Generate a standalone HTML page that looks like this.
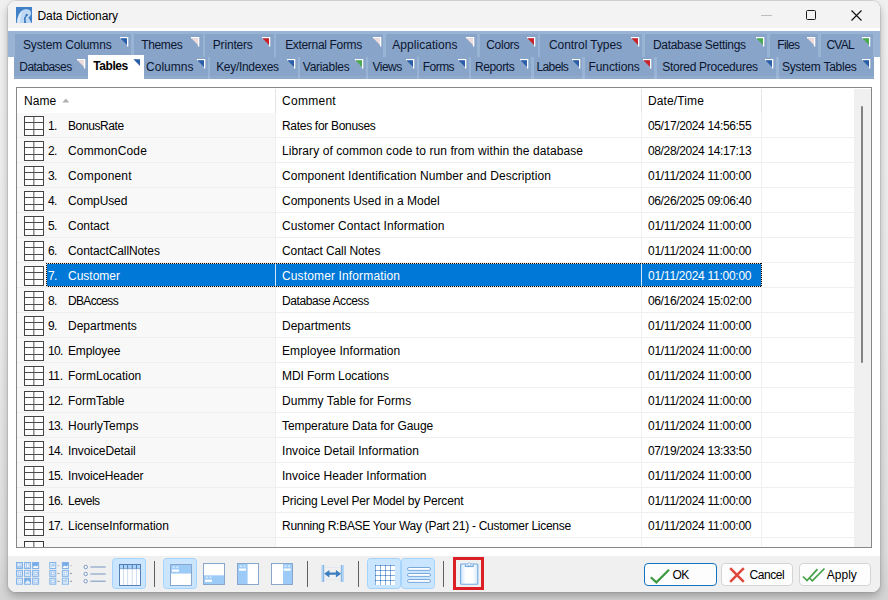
<!DOCTYPE html>
<html><head><meta charset="utf-8"><title>Data Dictionary</title>
<style>
html,body{margin:0;padding:0}
body{width:888px;height:600px;overflow:hidden;position:relative;background:linear-gradient(#f0f0f0,#ebebeb 50%,#dedede 92%,#d4d4d4);font-family:"Liberation Sans",sans-serif;font-size:12px}
.a{position:absolute;display:block}
.t{position:absolute;white-space:nowrap;font-family:"Liberation Sans",sans-serif;font-size:12px}
#win{position:absolute;left:8px;top:1px;width:872px;height:591px;border-radius:8px;background:#fff;overflow:hidden;box-shadow:0 0 0 1px rgba(140,140,140,.25),0 4px 9px 0 rgba(0,0,0,.28)}
#in{position:absolute;left:-8px;top:-1px;width:888px;height:600px}
</style></head><body>
<div id="win"><div id="in">
<div class="a" style="left:8px;top:1px;width:872px;height:27px;background:#f3f3f3"></div>
<svg class="a" style="left:16px;top:7px" width="16" height="16" viewBox="0 0 16 16"><rect width="16" height="16" fill="#3f80c8"/><path d="M0.8 16C1.2 9.5 3.5 4 8 2.6C12 1.5 15.4 3.2 15 6.6C14.8 8.6 13.8 9.8 12.4 10.4L15.6 16H10.4L9.4 13L9.2 16Z" fill="#bfd9f4"/><path d="M1.2 16C1.6 11 3.4 6.4 6.6 4.2C4.8 7 4 11 4 16Z" fill="#dcebfa"/><path d="M9.3 9.6C9.1 7.7 10 6.7 11.2 6.9C12.2 7.1 12.2 8.3 11.4 8.9L9.9 9.9L9.4 16H8.1V10.2Z" fill="#3a78be"/></svg>
<div class="t" style="left:37.5px;top:2.2px;height:29px;line-height:29px;color:#000;letter-spacing:-0.102px;">Data Dictionary</div>
<div class="a" style="left:761px;top:14.6px;width:10.5px;height:1px;background:#bdbdbd"></div>
<div class="a" style="left:805.6px;top:9.8px;width:10.4px;height:10.4px;border:1.2px solid #1a1a1a;border-radius:1.5px;box-sizing:border-box"></div>
<svg class="a" style="left:851.4px;top:9.7px" width="11" height="11" viewBox="0 0 11 11"><path d="M0.5 0.5L10.5 10.5M10.5 0.5L0.5 10.5" stroke="#111" stroke-width="1.15" fill="none"/></svg>
<div class="a" style="left:8px;top:31px;width:872px;height:25.5px;background:#99b3d5"></div>
<div class="a" style="left:14px;top:56px;width:860px;height:22.7px;background:#99b3d5"></div>
<div class="a" style="left:14.5px;top:33.9px;width:116.5px;height:22.9px;background:#88a4c8"></div>
<div class="t" style="left:23px;top:34.1px;height:22px;line-height:22px;color:#0b1630;letter-spacing:-0.157px;">System Columns</div>
<svg class="a" style="left:120px;top:36.6px" width="9" height="10" viewBox="0 0 9 10"><path d="M0 0H8.3V9.6H6.9V1.4H0Z" fill="#fff"/><path d="M0.4 1.3H7V8Z" fill="#2b5ea9"/></svg>
<div class="a" style="left:133.7px;top:33.9px;width:69.0px;height:22.9px;background:#88a4c8"></div>
<div class="t" style="left:141.2px;top:34.1px;height:22px;line-height:22px;color:#0b1630;letter-spacing:-0.358px;">Themes</div>
<svg class="a" style="left:191px;top:36.6px" width="9" height="10" viewBox="0 0 9 10"><path d="M0 0H8.3V9.6H6.9V1.4H0Z" fill="#fff"/><path d="M0.4 1.3H7V8Z" fill="#efdcdc"/></svg>
<div class="a" style="left:205.3px;top:33.9px;width:68.3px;height:22.9px;background:#88a4c8"></div>
<div class="t" style="left:212.8px;top:34.1px;height:22px;line-height:22px;color:#0b1630;letter-spacing:-0.181px;">Printers</div>
<svg class="a" style="left:262px;top:36.6px" width="9" height="10" viewBox="0 0 9 10"><path d="M0 0H8.3V9.6H6.9V1.4H0Z" fill="#fff"/><path d="M0.4 1.3H7V8Z" fill="#c9222b"/></svg>
<div class="a" style="left:276.3px;top:33.9px;width:107.0px;height:22.9px;background:#88a4c8"></div>
<div class="t" style="left:285.2px;top:34.1px;height:22px;line-height:22px;color:#0b1630;letter-spacing:-0.332px;">External Forms</div>
<svg class="a" style="left:372.5px;top:36.6px" width="9" height="10" viewBox="0 0 9 10"><path d="M0 0H8.3V9.6H6.9V1.4H0Z" fill="#fff"/><path d="M0.4 1.3H7V8Z" fill="#efdcdc"/></svg>
<div class="a" style="left:386px;top:33.9px;width:90.8px;height:22.9px;background:#88a4c8"></div>
<div class="t" style="left:392.3px;top:34.1px;height:22px;line-height:22px;color:#0b1630;letter-spacing:0.041px;">Applications</div>
<svg class="a" style="left:466px;top:36.6px" width="9" height="10" viewBox="0 0 9 10"><path d="M0 0H8.3V9.6H6.9V1.4H0Z" fill="#fff"/><path d="M0.4 1.3H7V8Z" fill="#efdcdc"/></svg>
<div class="a" style="left:479.5px;top:33.9px;width:58.1px;height:22.9px;background:#88a4c8"></div>
<div class="t" style="left:486.2px;top:34.1px;height:22px;line-height:22px;color:#0b1630;letter-spacing:-0.263px;">Colors</div>
<svg class="a" style="left:527px;top:36.6px" width="9" height="10" viewBox="0 0 9 10"><path d="M0 0H8.3V9.6H6.9V1.4H0Z" fill="#fff"/><path d="M0.4 1.3H7V8Z" fill="#c9222b"/></svg>
<div class="a" style="left:540.2px;top:33.9px;width:101.5px;height:22.9px;background:#88a4c8"></div>
<div class="t" style="left:549px;top:34.1px;height:22px;line-height:22px;color:#0b1630;letter-spacing:-0.063px;">Control Types</div>
<svg class="a" style="left:630.5px;top:36.6px" width="9" height="10" viewBox="0 0 9 10"><path d="M0 0H8.3V9.6H6.9V1.4H0Z" fill="#fff"/><path d="M0.4 1.3H7V8Z" fill="#c9222b"/></svg>
<div class="a" style="left:645px;top:33.9px;width:122.0px;height:22.9px;background:#88a4c8"></div>
<div class="t" style="left:653px;top:34.1px;height:22px;line-height:22px;color:#0b1630;letter-spacing:-0.315px;">Database Settings</div>
<svg class="a" style="left:756px;top:36.6px" width="9" height="10" viewBox="0 0 9 10"><path d="M0 0H8.3V9.6H6.9V1.4H0Z" fill="#fff"/><path d="M0.4 1.3H7V8Z" fill="#4cad50"/></svg>
<div class="a" style="left:770px;top:33.9px;width:48.3px;height:22.9px;background:#88a4c8"></div>
<div class="t" style="left:777.2px;top:34.1px;height:22px;line-height:22px;color:#0b1630;letter-spacing:-0.627px;">Files</div>
<svg class="a" style="left:807.2px;top:36.6px" width="9" height="10" viewBox="0 0 9 10"><path d="M0 0H8.3V9.6H6.9V1.4H0Z" fill="#fff"/><path d="M0.4 1.3H7V8Z" fill="#efdcdc"/></svg>
<div class="a" style="left:820.5px;top:33.9px;width:52.2px;height:22.9px;background:#88a4c8"></div>
<div class="t" style="left:826.4px;top:34.1px;height:22px;line-height:22px;color:#0b1630;letter-spacing:-0.764px;">CVAL</div>
<svg class="a" style="left:861.7px;top:36.6px" width="9" height="10" viewBox="0 0 9 10"><path d="M0 0H8.3V9.6H6.9V1.4H0Z" fill="#fff"/><path d="M0.4 1.3H7V8Z" fill="#4cad50"/></svg>
<div class="a" style="left:14px;top:57px;width:74.0px;height:21.7px;background:#88a4c8"></div>
<div class="t" style="left:19.3px;top:55.9px;height:22px;line-height:22px;color:#0b1630;letter-spacing:-0.563px;">Databases</div>
<svg class="a" style="left:77.2px;top:59.2px" width="9" height="10" viewBox="0 0 9 10"><path d="M0 0H8.3V9.6H6.9V1.4H0Z" fill="#fff"/><path d="M0.4 1.3H7V8Z" fill="#efdcdc"/></svg>
<div class="a" style="left:88px;top:54.6px;width:56.0px;height:24px;background:#fff"></div>
<div class="t" style="left:93.3px;top:54.6px;height:22px;line-height:22px;color:#000;letter-spacing:-0.454px;font-weight:bold;">Tables</div>
<svg class="a" style="left:132.7px;top:58.2px" width="9" height="10" viewBox="0 0 9 10"><path d="M0 0H8.3V9.6H6.9V1.4H0Z" fill="#fff"/><path d="M0.4 1.3H7V8Z" fill="#2b5ea9"/></svg>
<div class="a" style="left:144px;top:57px;width:63.8px;height:21.7px;background:#88a4c8"></div>
<div class="t" style="left:146px;top:55.9px;height:22px;line-height:22px;color:#0b1630;letter-spacing:0.036px;">Columns</div>
<svg class="a" style="left:197.2px;top:59.2px" width="9" height="10" viewBox="0 0 9 10"><path d="M0 0H8.3V9.6H6.9V1.4H0Z" fill="#fff"/><path d="M0.4 1.3H7V8Z" fill="#2b5ea9"/></svg>
<div class="a" style="left:210px;top:57px;width:87.5px;height:21.7px;background:#88a4c8"></div>
<div class="t" style="left:216.2px;top:55.9px;height:22px;line-height:22px;color:#0b1630;letter-spacing:-0.322px;">Key/Indexes</div>
<svg class="a" style="left:286.7px;top:59.2px" width="9" height="10" viewBox="0 0 9 10"><path d="M0 0H8.3V9.6H6.9V1.4H0Z" fill="#fff"/><path d="M0.4 1.3H7V8Z" fill="#2b5ea9"/></svg>
<div class="a" style="left:299.8px;top:57px;width:65.8px;height:21.7px;background:#88a4c8"></div>
<div class="t" style="left:302.8px;top:55.9px;height:22px;line-height:22px;color:#0b1630;letter-spacing:-0.282px;">Variables</div>
<svg class="a" style="left:354.6px;top:59.2px" width="9" height="10" viewBox="0 0 9 10"><path d="M0 0H8.3V9.6H6.9V1.4H0Z" fill="#fff"/><path d="M0.4 1.3H7V8Z" fill="#4cad50"/></svg>
<div class="a" style="left:368px;top:57px;width:49.0px;height:21.7px;background:#88a4c8"></div>
<div class="t" style="left:372.4px;top:55.9px;height:22px;line-height:22px;color:#0b1630;letter-spacing:-0.479px;">Views</div>
<svg class="a" style="left:406.2px;top:59.2px" width="9" height="10" viewBox="0 0 9 10"><path d="M0 0H8.3V9.6H6.9V1.4H0Z" fill="#fff"/><path d="M0.4 1.3H7V8Z" fill="#2b5ea9"/></svg>
<div class="a" style="left:419.4px;top:57px;width:49.3px;height:21.7px;background:#88a4c8"></div>
<div class="t" style="left:422.7px;top:55.9px;height:22px;line-height:22px;color:#0b1630;letter-spacing:-0.519px;">Forms</div>
<svg class="a" style="left:458.3px;top:59.2px" width="9" height="10" viewBox="0 0 9 10"><path d="M0 0H8.3V9.6H6.9V1.4H0Z" fill="#fff"/><path d="M0.4 1.3H7V8Z" fill="#2b5ea9"/></svg>
<div class="a" style="left:471.4px;top:57px;width:59.4px;height:21.7px;background:#88a4c8"></div>
<div class="t" style="left:475px;top:55.9px;height:22px;line-height:22px;color:#0b1630;letter-spacing:-0.388px;">Reports</div>
<svg class="a" style="left:520.1px;top:59.2px" width="9" height="10" viewBox="0 0 9 10"><path d="M0 0H8.3V9.6H6.9V1.4H0Z" fill="#fff"/><path d="M0.4 1.3H7V8Z" fill="#2b5ea9"/></svg>
<div class="a" style="left:533.5px;top:57px;width:48.9px;height:21.7px;background:#88a4c8"></div>
<div class="t" style="left:536.4px;top:55.9px;height:22px;line-height:22px;color:#0b1630;letter-spacing:-0.577px;">Labels</div>
<svg class="a" style="left:571.8px;top:59.2px" width="9" height="10" viewBox="0 0 9 10"><path d="M0 0H8.3V9.6H6.9V1.4H0Z" fill="#fff"/><path d="M0.4 1.3H7V8Z" fill="#2b5ea9"/></svg>
<div class="a" style="left:584.6px;top:57px;width:69.2px;height:21.7px;background:#88a4c8"></div>
<div class="t" style="left:588.5px;top:55.9px;height:22px;line-height:22px;color:#0b1630;letter-spacing:-0.092px;">Functions</div>
<svg class="a" style="left:643px;top:59.2px" width="9" height="10" viewBox="0 0 9 10"><path d="M0 0H8.3V9.6H6.9V1.4H0Z" fill="#fff"/><path d="M0.4 1.3H7V8Z" fill="#c9222b"/></svg>
<div class="a" style="left:657px;top:57px;width:119.0px;height:21.7px;background:#88a4c8"></div>
<div class="t" style="left:662.3px;top:55.9px;height:22px;line-height:22px;color:#0b1630;letter-spacing:-0.268px;">Stored Procedures</div>
<svg class="a" style="left:765.3px;top:59.2px" width="9" height="10" viewBox="0 0 9 10"><path d="M0 0H8.3V9.6H6.9V1.4H0Z" fill="#fff"/><path d="M0.4 1.3H7V8Z" fill="#2b5ea9"/></svg>
<div class="a" style="left:779px;top:57px;width:94.5px;height:21.7px;background:#88a4c8"></div>
<div class="t" style="left:782px;top:55.9px;height:22px;line-height:22px;color:#0b1630;letter-spacing:-0.247px;">System Tables</div>
<svg class="a" style="left:862.2px;top:59.2px" width="9" height="10" viewBox="0 0 9 10"><path d="M0 0H8.3V9.6H6.9V1.4H0Z" fill="#fff"/><path d="M0.4 1.3H7V8Z" fill="#2b5ea9"/></svg>
<div class="a" style="left:14px;top:75.6px;width:860px;height:3.1px;background:rgba(255,255,255,0.07)"></div>
<div class="a" style="left:88px;top:75px;width:56px;height:4px;background:#fff"></div>
<div class="a" style="left:16px;top:87px;width:855.5px;height:460.5px;background:#fff;border:1px solid #868789;box-sizing:border-box"></div>
<div class="a" style="left:17px;top:113px;width:258px;height:434px;background:#f8f8f8"></div>
<div class="a" style="left:854px;top:89px;width:17px;height:458px;background:#f0f0f0"></div>
<div class="a" style="left:861px;top:106px;width:2.2px;height:256.5px;background:#828282;border-radius:1px"></div>
<div class="t" style="left:24px;top:90.2px;height:23px;line-height:23px;color:#000;letter-spacing:0.050px;">Name</div>
<svg class="a" style="left:61.6px;top:98px" width="8" height="5" viewBox="0 0 8 5"><path d="M0.3 4.4L3.8 0.6L7.3 4.4Z" fill="#b0b0b0"/></svg>
<div class="t" style="left:282px;top:90.2px;height:23px;line-height:23px;color:#000;letter-spacing:0.280px;">Comment</div>
<div class="t" style="left:648px;top:90.2px;height:23px;line-height:23px;color:#000;letter-spacing:0.117px;">Date/Time</div>
<div class="a" style="left:275px;top:89px;width:1px;height:24px;background:#e5e5e5"></div>
<div class="a" style="left:275px;top:113px;width:1px;height:434px;background:#f0f0f0"></div>
<div class="a" style="left:641px;top:89px;width:1px;height:24px;background:#e5e5e5"></div>
<div class="a" style="left:641px;top:113px;width:1px;height:434px;background:#f0f0f0"></div>
<div class="a" style="left:761px;top:89px;width:1px;height:24px;background:#e5e5e5"></div>
<div class="a" style="left:761px;top:113px;width:1px;height:434px;background:#f0f0f0"></div>
<div class="a" style="left:17px;top:137px;width:837px;height:1px;background:#efefef"></div>
<svg class="a" style="left:24px;top:116px" width="20" height="20" viewBox="0 0 20 20"><rect x="0.5" y="0.5" width="19" height="19" fill="#fff" stroke="#444"/><path d="M9.75 1V19" stroke="#8c8c8c" stroke-width="1.5"/><path d="M1 6.5H19M1 13.5H19" stroke="#4c4c4c"/></svg>
<div class="t" style="left:48px;top:114.2px;height:25px;line-height:25px;color:#000;letter-spacing:-0.720px;">1.</div>
<div class="t" style="left:68px;top:114.2px;height:25px;line-height:25px;color:#000;letter-spacing:-0.400px;">BonusRate</div>
<div class="t" style="left:282px;top:114.2px;height:25px;line-height:25px;color:#000;letter-spacing:-0.304px;">Rates for Bonuses</div>
<div class="t" style="left:648px;top:114.2px;height:25px;line-height:25px;color:#000;letter-spacing:-0.363px;">05/17/2024 14:56:55</div>
<div class="a" style="left:17px;top:162px;width:837px;height:1px;background:#efefef"></div>
<svg class="a" style="left:24px;top:141px" width="20" height="20" viewBox="0 0 20 20"><rect x="0.5" y="0.5" width="19" height="19" fill="#fff" stroke="#444"/><path d="M9.75 1V19" stroke="#8c8c8c" stroke-width="1.5"/><path d="M1 6.5H19M1 13.5H19" stroke="#4c4c4c"/></svg>
<div class="t" style="left:48px;top:139.2px;height:25px;line-height:25px;color:#000;letter-spacing:-0.720px;">2.</div>
<div class="t" style="left:68px;top:139.2px;height:25px;line-height:25px;color:#000;letter-spacing:0.160px;">CommonCode</div>
<div class="t" style="left:282px;top:139.2px;height:25px;line-height:25px;color:#000;letter-spacing:0.077px;">Library of common code to run from within the database</div>
<div class="t" style="left:648px;top:139.2px;height:25px;line-height:25px;color:#000;letter-spacing:-0.363px;">08/28/2024 14:17:13</div>
<div class="a" style="left:17px;top:187px;width:837px;height:1px;background:#efefef"></div>
<svg class="a" style="left:24px;top:166px" width="20" height="20" viewBox="0 0 20 20"><rect x="0.5" y="0.5" width="19" height="19" fill="#fff" stroke="#444"/><path d="M9.75 1V19" stroke="#8c8c8c" stroke-width="1.5"/><path d="M1 6.5H19M1 13.5H19" stroke="#4c4c4c"/></svg>
<div class="t" style="left:48px;top:164.2px;height:25px;line-height:25px;color:#000;letter-spacing:-0.720px;">3.</div>
<div class="t" style="left:68px;top:164.2px;height:25px;line-height:25px;color:#000;letter-spacing:0.189px;">Component</div>
<div class="t" style="left:282px;top:164.2px;height:25px;line-height:25px;color:#000;letter-spacing:0.075px;">Component Identification Number and Description</div>
<div class="t" style="left:648px;top:164.2px;height:25px;line-height:25px;color:#000;letter-spacing:-0.269px;">01/11/2024 11:00:00</div>
<div class="a" style="left:17px;top:212px;width:837px;height:1px;background:#efefef"></div>
<svg class="a" style="left:24px;top:191px" width="20" height="20" viewBox="0 0 20 20"><rect x="0.5" y="0.5" width="19" height="19" fill="#fff" stroke="#444"/><path d="M9.75 1V19" stroke="#8c8c8c" stroke-width="1.5"/><path d="M1 6.5H19M1 13.5H19" stroke="#4c4c4c"/></svg>
<div class="t" style="left:48px;top:189.2px;height:25px;line-height:25px;color:#000;letter-spacing:-0.720px;">4.</div>
<div class="t" style="left:68px;top:189.2px;height:25px;line-height:25px;color:#000;letter-spacing:-0.094px;">CompUsed</div>
<div class="t" style="left:282px;top:189.2px;height:25px;line-height:25px;color:#000;letter-spacing:-0.018px;">Components Used in a Model</div>
<div class="t" style="left:648px;top:189.2px;height:25px;line-height:25px;color:#000;letter-spacing:-0.363px;">06/26/2025 09:06:40</div>
<div class="a" style="left:17px;top:237px;width:837px;height:1px;background:#efefef"></div>
<svg class="a" style="left:24px;top:216px" width="20" height="20" viewBox="0 0 20 20"><rect x="0.5" y="0.5" width="19" height="19" fill="#fff" stroke="#444"/><path d="M9.75 1V19" stroke="#8c8c8c" stroke-width="1.5"/><path d="M1 6.5H19M1 13.5H19" stroke="#4c4c4c"/></svg>
<div class="t" style="left:48px;top:214.2px;height:25px;line-height:25px;color:#000;letter-spacing:-0.720px;">5.</div>
<div class="t" style="left:68px;top:214.2px;height:25px;line-height:25px;color:#000;letter-spacing:-0.039px;">Contact</div>
<div class="t" style="left:282px;top:214.2px;height:25px;line-height:25px;color:#000;letter-spacing:0.084px;">Customer Contact Information</div>
<div class="t" style="left:648px;top:214.2px;height:25px;line-height:25px;color:#000;letter-spacing:-0.269px;">01/11/2024 11:00:00</div>
<div class="a" style="left:17px;top:262px;width:837px;height:1px;background:#efefef"></div>
<svg class="a" style="left:24px;top:241px" width="20" height="20" viewBox="0 0 20 20"><rect x="0.5" y="0.5" width="19" height="19" fill="#fff" stroke="#444"/><path d="M9.75 1V19" stroke="#8c8c8c" stroke-width="1.5"/><path d="M1 6.5H19M1 13.5H19" stroke="#4c4c4c"/></svg>
<div class="t" style="left:48px;top:239.2px;height:25px;line-height:25px;color:#000;letter-spacing:-0.720px;">6.</div>
<div class="t" style="left:68px;top:239.2px;height:25px;line-height:25px;color:#000;letter-spacing:-0.098px;">ContactCallNotes</div>
<div class="t" style="left:282px;top:239.2px;height:25px;line-height:25px;color:#000;letter-spacing:-0.096px;">Contact Call Notes</div>
<div class="t" style="left:648px;top:239.2px;height:25px;line-height:25px;color:#000;letter-spacing:-0.269px;">01/11/2024 11:00:00</div>
<div class="a" style="left:17px;top:287px;width:837px;height:1px;background:#efefef"></div>
<div class="a" style="left:46px;top:263px;width:716px;height:24px;background:#0078d7"></div>
<div class="a" style="left:46px;top:263px;width:716px;height:1px;background:repeating-linear-gradient(90deg,#0a0a0a 0 1px,#e9d6c6 1px 2px)"></div>
<div class="a" style="left:46px;top:286px;width:716px;height:1px;background:repeating-linear-gradient(90deg,#0a0a0a 0 1px,#e9d6c6 1px 2px)"></div>
<div class="a" style="left:46px;top:263px;width:1px;height:24px;background:repeating-linear-gradient(180deg,#0a0a0a 0 1px,#e9d6c6 1px 2px)"></div>
<div class="a" style="left:761px;top:263px;width:1px;height:24px;background:repeating-linear-gradient(180deg,#0a0a0a 0 1px,#e9d6c6 1px 2px)"></div>
<div class="a" style="left:275px;top:264px;width:1px;height:22px;background:#cfe4f7"></div>
<div class="a" style="left:641px;top:264px;width:1px;height:22px;background:#cfe4f7"></div>
<svg class="a" style="left:24px;top:266px" width="20" height="20" viewBox="0 0 20 20"><rect x="0.5" y="0.5" width="19" height="19" fill="#fff" stroke="#444"/><path d="M9.75 1V19" stroke="#8c8c8c" stroke-width="1.5"/><path d="M1 6.5H19M1 13.5H19" stroke="#4c4c4c"/></svg>
<div class="t" style="left:48px;top:264.2px;height:25px;line-height:25px;color:#fff;letter-spacing:-0.720px;">7.</div>
<div class="t" style="left:68px;top:264.2px;height:25px;line-height:25px;color:#fff;letter-spacing:0.001px;">Customer</div>
<div class="t" style="left:282px;top:264.2px;height:25px;line-height:25px;color:#fff;letter-spacing:0.135px;">Customer Information</div>
<div class="t" style="left:648px;top:264.2px;height:25px;line-height:25px;color:#fff;letter-spacing:-0.269px;">01/11/2024 11:00:00</div>
<div class="a" style="left:17px;top:312px;width:837px;height:1px;background:#efefef"></div>
<svg class="a" style="left:24px;top:291px" width="20" height="20" viewBox="0 0 20 20"><rect x="0.5" y="0.5" width="19" height="19" fill="#fff" stroke="#444"/><path d="M9.75 1V19" stroke="#8c8c8c" stroke-width="1.5"/><path d="M1 6.5H19M1 13.5H19" stroke="#4c4c4c"/></svg>
<div class="t" style="left:48px;top:289.2px;height:25px;line-height:25px;color:#000;letter-spacing:-0.720px;">8.</div>
<div class="t" style="left:68px;top:289.2px;height:25px;line-height:25px;color:#000;letter-spacing:-0.672px;">DBAccess</div>
<div class="t" style="left:282px;top:289.2px;height:25px;line-height:25px;color:#000;letter-spacing:-0.399px;">Database Access</div>
<div class="t" style="left:648px;top:289.2px;height:25px;line-height:25px;color:#000;letter-spacing:-0.363px;">06/16/2024 15:02:00</div>
<div class="a" style="left:17px;top:337px;width:837px;height:1px;background:#efefef"></div>
<svg class="a" style="left:24px;top:316px" width="20" height="20" viewBox="0 0 20 20"><rect x="0.5" y="0.5" width="19" height="19" fill="#fff" stroke="#444"/><path d="M9.75 1V19" stroke="#8c8c8c" stroke-width="1.5"/><path d="M1 6.5H19M1 13.5H19" stroke="#4c4c4c"/></svg>
<div class="t" style="left:48px;top:314.2px;height:25px;line-height:25px;color:#000;letter-spacing:-0.720px;">9.</div>
<div class="t" style="left:68px;top:314.2px;height:25px;line-height:25px;color:#000;letter-spacing:0.002px;">Departments</div>
<div class="t" style="left:282px;top:314.2px;height:25px;line-height:25px;color:#000;letter-spacing:0.002px;">Departments</div>
<div class="t" style="left:648px;top:314.2px;height:25px;line-height:25px;color:#000;letter-spacing:-0.269px;">01/11/2024 11:00:00</div>
<div class="a" style="left:17px;top:362px;width:837px;height:1px;background:#efefef"></div>
<svg class="a" style="left:24px;top:341px" width="20" height="20" viewBox="0 0 20 20"><rect x="0.5" y="0.5" width="19" height="19" fill="#fff" stroke="#444"/><path d="M9.75 1V19" stroke="#8c8c8c" stroke-width="1.5"/><path d="M1 6.5H19M1 13.5H19" stroke="#4c4c4c"/></svg>
<div class="t" style="left:48px;top:339.2px;height:25px;line-height:25px;color:#000;letter-spacing:-0.705px;">10.</div>
<div class="t" style="left:68px;top:339.2px;height:25px;line-height:25px;color:#000;letter-spacing:-0.138px;">Employee</div>
<div class="t" style="left:282px;top:339.2px;height:25px;line-height:25px;color:#000;letter-spacing:0.080px;">Employee Information</div>
<div class="t" style="left:648px;top:339.2px;height:25px;line-height:25px;color:#000;letter-spacing:-0.269px;">01/11/2024 11:00:00</div>
<div class="a" style="left:17px;top:387px;width:837px;height:1px;background:#efefef"></div>
<svg class="a" style="left:24px;top:366px" width="20" height="20" viewBox="0 0 20 20"><rect x="0.5" y="0.5" width="19" height="19" fill="#fff" stroke="#444"/><path d="M9.75 1V19" stroke="#8c8c8c" stroke-width="1.5"/><path d="M1 6.5H19M1 13.5H19" stroke="#4c4c4c"/></svg>
<div class="t" style="left:48px;top:364.2px;height:25px;line-height:25px;color:#000;letter-spacing:-0.409px;">11.</div>
<div class="t" style="left:68px;top:364.2px;height:25px;line-height:25px;color:#000;letter-spacing:-0.007px;">FormLocation</div>
<div class="t" style="left:282px;top:364.2px;height:25px;line-height:25px;color:#000;letter-spacing:-0.062px;">MDI Form Locations</div>
<div class="t" style="left:648px;top:364.2px;height:25px;line-height:25px;color:#000;letter-spacing:-0.269px;">01/11/2024 11:00:00</div>
<div class="a" style="left:17px;top:412px;width:837px;height:1px;background:#efefef"></div>
<svg class="a" style="left:24px;top:391px" width="20" height="20" viewBox="0 0 20 20"><rect x="0.5" y="0.5" width="19" height="19" fill="#fff" stroke="#444"/><path d="M9.75 1V19" stroke="#8c8c8c" stroke-width="1.5"/><path d="M1 6.5H19M1 13.5H19" stroke="#4c4c4c"/></svg>
<div class="t" style="left:48px;top:389.2px;height:25px;line-height:25px;color:#000;letter-spacing:-0.705px;">12.</div>
<div class="t" style="left:68px;top:389.2px;height:25px;line-height:25px;color:#000;letter-spacing:-0.021px;">FormTable</div>
<div class="t" style="left:282px;top:389.2px;height:25px;line-height:25px;color:#000;letter-spacing:0.069px;">Dummy Table for Forms</div>
<div class="t" style="left:648px;top:389.2px;height:25px;line-height:25px;color:#000;letter-spacing:-0.269px;">01/11/2024 11:00:00</div>
<div class="a" style="left:17px;top:437px;width:837px;height:1px;background:#efefef"></div>
<svg class="a" style="left:24px;top:416px" width="20" height="20" viewBox="0 0 20 20"><rect x="0.5" y="0.5" width="19" height="19" fill="#fff" stroke="#444"/><path d="M9.75 1V19" stroke="#8c8c8c" stroke-width="1.5"/><path d="M1 6.5H19M1 13.5H19" stroke="#4c4c4c"/></svg>
<div class="t" style="left:48px;top:414.2px;height:25px;line-height:25px;color:#000;letter-spacing:-0.705px;">13.</div>
<div class="t" style="left:68px;top:414.2px;height:25px;line-height:25px;color:#000;letter-spacing:0.048px;">HourlyTemps</div>
<div class="t" style="left:282px;top:414.2px;height:25px;line-height:25px;color:#000;letter-spacing:-0.063px;">Temperature Data for Gauge</div>
<div class="t" style="left:648px;top:414.2px;height:25px;line-height:25px;color:#000;letter-spacing:-0.269px;">01/11/2024 11:00:00</div>
<div class="a" style="left:17px;top:462px;width:837px;height:1px;background:#efefef"></div>
<svg class="a" style="left:24px;top:441px" width="20" height="20" viewBox="0 0 20 20"><rect x="0.5" y="0.5" width="19" height="19" fill="#fff" stroke="#444"/><path d="M9.75 1V19" stroke="#8c8c8c" stroke-width="1.5"/><path d="M1 6.5H19M1 13.5H19" stroke="#4c4c4c"/></svg>
<div class="t" style="left:48px;top:439.2px;height:25px;line-height:25px;color:#000;letter-spacing:-0.705px;">14.</div>
<div class="t" style="left:68px;top:439.2px;height:25px;line-height:25px;color:#000;letter-spacing:-0.086px;">InvoiceDetail</div>
<div class="t" style="left:282px;top:439.2px;height:25px;line-height:25px;color:#000;letter-spacing:0.057px;">Invoice Detail Information</div>
<div class="t" style="left:648px;top:439.2px;height:25px;line-height:25px;color:#000;letter-spacing:-0.363px;">07/19/2024 13:33:50</div>
<div class="a" style="left:17px;top:487px;width:837px;height:1px;background:#efefef"></div>
<svg class="a" style="left:24px;top:466px" width="20" height="20" viewBox="0 0 20 20"><rect x="0.5" y="0.5" width="19" height="19" fill="#fff" stroke="#444"/><path d="M9.75 1V19" stroke="#8c8c8c" stroke-width="1.5"/><path d="M1 6.5H19M1 13.5H19" stroke="#4c4c4c"/></svg>
<div class="t" style="left:48px;top:464.2px;height:25px;line-height:25px;color:#000;letter-spacing:-0.705px;">15.</div>
<div class="t" style="left:68px;top:464.2px;height:25px;line-height:25px;color:#000;letter-spacing:-0.166px;">InvoiceHeader</div>
<div class="t" style="left:282px;top:464.2px;height:25px;line-height:25px;color:#000;letter-spacing:0.018px;">Invoice Header Information</div>
<div class="t" style="left:648px;top:464.2px;height:25px;line-height:25px;color:#000;letter-spacing:-0.269px;">01/11/2024 11:00:00</div>
<div class="a" style="left:17px;top:512px;width:837px;height:1px;background:#efefef"></div>
<svg class="a" style="left:24px;top:491px" width="20" height="20" viewBox="0 0 20 20"><rect x="0.5" y="0.5" width="19" height="19" fill="#fff" stroke="#444"/><path d="M9.75 1V19" stroke="#8c8c8c" stroke-width="1.5"/><path d="M1 6.5H19M1 13.5H19" stroke="#4c4c4c"/></svg>
<div class="t" style="left:48px;top:489.2px;height:25px;line-height:25px;color:#000;letter-spacing:-0.705px;">16.</div>
<div class="t" style="left:68px;top:489.2px;height:25px;line-height:25px;color:#000;letter-spacing:-0.523px;">Levels</div>
<div class="t" style="left:282px;top:489.2px;height:25px;line-height:25px;color:#000;letter-spacing:-0.180px;">Pricing Level Per Model by Percent</div>
<div class="t" style="left:648px;top:489.2px;height:25px;line-height:25px;color:#000;letter-spacing:-0.269px;">01/11/2024 11:00:00</div>
<div class="a" style="left:17px;top:537px;width:837px;height:1px;background:#efefef"></div>
<svg class="a" style="left:24px;top:516px" width="20" height="20" viewBox="0 0 20 20"><rect x="0.5" y="0.5" width="19" height="19" fill="#fff" stroke="#444"/><path d="M9.75 1V19" stroke="#8c8c8c" stroke-width="1.5"/><path d="M1 6.5H19M1 13.5H19" stroke="#4c4c4c"/></svg>
<div class="t" style="left:48px;top:514.2px;height:25px;line-height:25px;color:#000;letter-spacing:-0.705px;">17.</div>
<div class="t" style="left:68px;top:514.2px;height:25px;line-height:25px;color:#000;letter-spacing:-0.029px;">LicenseInformation</div>
<div class="t" style="left:282px;top:514.2px;height:25px;line-height:25px;color:#000;letter-spacing:-0.287px;">Running R:BASE Your Way (Part 21) - Customer License</div>
<div class="t" style="left:648px;top:514.2px;height:25px;line-height:25px;color:#000;letter-spacing:-0.269px;">01/11/2024 11:00:00</div>
<svg class="a" style="left:24px;top:541px" width="20" height="6" viewBox="0 0 20 6"><rect x="0.5" y="0.5" width="19" height="19" fill="#fff" stroke="#3a3a3a"/><path d="M9.75 1V19" stroke="#8c8c8c" stroke-width="1.5"/></svg>
<div class="a" style="left:8px;top:556px;width:872px;height:36px;background:#f0f0f0"></div>
<svg class="a" style="left:16px;top:562.2px" width="24" height="23" viewBox="0 0 24 23"><g transform="translate(0.0,0.0)" opacity="0.9"><rect x="0.5" y="0.5" width="6" height="6" fill="#a0c7f2" stroke="#78ade6"/><rect x="1.6" y="1.4" width="1.8" height="2.6" fill="#eef6fe"/><rect x="4" y="1.4" width="1.5" height="2" fill="#e3effc"/></g><g transform="translate(8.05,0.0)" opacity="0.9"><rect x="0.5" y="0.5" width="6" height="6" fill="#d9e9fb" stroke="#78ade6"/><rect x="2.3" y="1.8" width="2.6" height="3.6" fill="#f4f9fe" stroke="#8dbaec" stroke-width="0.7"/></g><g transform="translate(16.1,0.0)" opacity="0.9"><rect x="0.5" y="0.5" width="6" height="6" fill="#68a4e5" stroke="#78ade6"/><path d="M1 6V4.8L3 3.4L4.4 4.4L6 3.2V6Z" fill="#f2f8fe"/></g><g transform="translate(0.0,7.85)" opacity="0.9"><rect x="0.5" y="0.5" width="6" height="6" fill="#d9e9fb" stroke="#78ade6"/><rect x="2.2" y="2.2" width="2.6" height="2.8" fill="#f4f9fe" stroke="#8dbaec" stroke-width="0.7"/></g><g transform="translate(8.05,7.85)" opacity="0.9"><rect x="0.5" y="0.5" width="6" height="6" fill="#eaf3fd" stroke="#78ade6"/><path d="M1.4 4.6V2.4H3V1.6H5.4V4.6Z" fill="#a9cdf4"/></g><g transform="translate(16.1,7.85)" opacity="0.9"><rect x="0.5" y="0.5" width="6" height="6" fill="#d9e9fb" stroke="#78ade6"/><rect x="1.9" y="2.4" width="3.2" height="2.2" fill="#f4f9fe" stroke="#8dbaec" stroke-width="0.7"/></g><g transform="translate(0.0,15.7)" opacity="0.9"><rect x="0.5" y="0.5" width="6" height="6" fill="#d9e9fb" stroke="#78ade6"/><path d="M2 2L5 5M5 2L2 5" stroke="#8dbaec" stroke-width="0.9"/><rect x="2.8" y="2.8" width="1.4" height="1.4" fill="#f4f9fe"/></g><g transform="translate(8.05,15.7)" opacity="0.9"><rect x="0.5" y="0.5" width="6" height="6" fill="#68a4e5" stroke="#78ade6"/><path d="M1 6V5L3.6 2.4L6 4.6V6Z" fill="#e4f0fd"/></g><g transform="translate(16.1,15.7)" opacity="0.9"><rect x="0.5" y="0.5" width="6" height="6" fill="#d9e9fb" stroke="#78ade6"/><rect x="1.9" y="2.4" width="3.2" height="2.2" fill="#f4f9fe" stroke="#8dbaec" stroke-width="0.7"/></g></svg>
<svg class="a" style="left:49px;top:562.2px" width="24" height="23" viewBox="0 0 24 23"><g transform="translate(0.3,0.0)" opacity="0.9"><rect x="0.5" y="0.5" width="6" height="6" fill="#eaf3fd" stroke="#78ade6"/><path d="M1.4 4.6V2.4H3V1.6H5.4V4.6Z" fill="#a9cdf4"/></g><rect x="8.5" y="3.10" width="2" height="1" fill="#8b9096" opacity="0.45"/><g transform="translate(12.9,0.0)" opacity="0.9"><rect x="0.5" y="0.5" width="6" height="6" fill="#68a4e5" stroke="#78ade6"/><path d="M1 6V4.8L3 3.4L4.4 4.4L6 3.2V6Z" fill="#f2f8fe"/></g><rect x="21.1" y="3.10" width="2" height="1" fill="#8b9096" opacity="0.45"/><g transform="translate(0.3,7.85)" opacity="0.9"><rect x="0.5" y="0.5" width="6" height="6" fill="#d9e9fb" stroke="#78ade6"/><rect x="2.2" y="2.2" width="2.6" height="2.8" fill="#f4f9fe" stroke="#8dbaec" stroke-width="0.7"/></g><rect x="8.5" y="10.95" width="2" height="1" fill="#8b9096" opacity="0.95"/><g transform="translate(12.9,7.85)" opacity="0.9"><rect x="0.5" y="0.5" width="6" height="6" fill="#d9e9fb" stroke="#78ade6"/><path d="M2 2L5 5M5 2L2 5" stroke="#8dbaec" stroke-width="0.9"/><rect x="2.8" y="2.8" width="1.4" height="1.4" fill="#f4f9fe"/></g><rect x="21.1" y="10.95" width="2" height="1" fill="#8b9096" opacity="0.95"/><g transform="translate(0.3,15.7)" opacity="0.9"><rect x="0.5" y="0.5" width="6" height="6" fill="#d9e9fb" stroke="#78ade6"/><rect x="1.9" y="2.4" width="3.2" height="2.2" fill="#f4f9fe" stroke="#8dbaec" stroke-width="0.7"/></g><rect x="8.5" y="18.80" width="2" height="1" fill="#8b9096" opacity="0.95"/><g transform="translate(12.9,15.7)" opacity="0.9"><rect x="0.5" y="0.5" width="6" height="6" fill="#eaf3fd" stroke="#78ade6"/><path d="M1.4 4.6V2.4H3V1.6H5.4V4.6Z" fill="#a9cdf4"/></g><rect x="21.1" y="18.80" width="2" height="1" fill="#8b9096" opacity="0.95"/></svg>
<svg class="a" style="left:83px;top:562px" width="24" height="24" viewBox="0 0 24 24"><circle cx="2.7" cy="5" r="1.75" fill="#f6f9fd" stroke="#6487b8" stroke-width="0.8"/><path d="M7.4 5H22.7" stroke="#6e8fbd" stroke-width="0.95"/><circle cx="2.7" cy="12" r="1.75" fill="#f6f9fd" stroke="#6487b8" stroke-width="0.8"/><path d="M7.4 12H22.7" stroke="#6e8fbd" stroke-width="0.95"/><circle cx="2.7" cy="19.2" r="1.75" fill="#f6f9fd" stroke="#6487b8" stroke-width="0.8"/><path d="M7.4 19.2H22.7" stroke="#6e8fbd" stroke-width="0.95"/></svg>
<div class="a" style="left:112px;top:558px;width:34px;height:30.5px;background:#c9e5ff;border:1px solid #a4d3fb;border-radius:3.5px;box-sizing:border-box"></div>
<svg class="a" style="left:119px;top:564px" width="22" height="22" viewBox="0 0 22 22"><rect x="0.5" y="0.5" width="21" height="21" fill="#fdfeff" stroke="#4774ad" stroke-width="0.9"/><rect x="1" y="1" width="20" height="3.6" fill="#a9d3fb"/><path d="M1 4.7H21" stroke="#6e97cb" stroke-width="0.8"/><path d="M4.5 5V21M8.6 5V21M13.2 5V21M17.5 5V21" stroke="#cbd8ef" stroke-width="0.9"/><path d="M4.5 1V4.8M8.6 1V4.8M13.2 1V4.8M17.5 1V4.8" stroke="#4774ad" stroke-width="0.9"/></svg>
<div class="a" style="left:154px;top:561px;width:1px;height:26px;background:#606060"></div>
<div class="a" style="left:163.3px;top:558px;width:33.7px;height:30.5px;background:#c9e5ff;border:1px solid #a4d3fb;border-radius:3.5px;box-sizing:border-box"></div>
<svg class="a" style="left:170.2px;top:563.6px" width="22" height="22" viewBox="0 0 22 22"><rect x="0.5" y="0.5" width="21" height="21" fill="#fff" stroke="#84a2ca" stroke-width="0.95"/><rect x="1" y="1" width="20" height="8.6" fill="#9ccbf7"/><rect x="2.8" y="2.3" width="2" height="1.8" fill="#d9ecfd"/><rect x="6.4" y="2.3" width="2" height="1.8" fill="#d9ecfd"/><rect x="2" y="5.5" width="7" height="2.2" fill="#fff"/></svg>
<svg class="a" style="left:203px;top:563.1px" width="22" height="22" viewBox="0 0 22 22"><rect x="0.5" y="0.5" width="21" height="21" fill="#fff" stroke="#84a2ca" stroke-width="0.95"/><rect x="1" y="12.3" width="20" height="8.7" fill="#9ccbf7"/><rect x="2.8" y="13.5" width="2" height="1.8" fill="#d9ecfd"/><rect x="6.4" y="13.5" width="2" height="1.8" fill="#d9ecfd"/><rect x="2" y="16.7" width="7" height="2.2" fill="#fff"/></svg>
<svg class="a" style="left:237px;top:563.1px" width="22" height="22" viewBox="0 0 22 22"><rect x="0.5" y="0.5" width="21" height="21" fill="#fff" stroke="#84a2ca" stroke-width="0.95"/><rect x="1" y="1" width="9.6" height="20" fill="#9ccbf7"/><rect x="2.8" y="2.3" width="2" height="1.8" fill="#d9ecfd"/><rect x="6.4" y="2.3" width="2" height="1.8" fill="#d9ecfd"/><rect x="2" y="5.5" width="7" height="2.2" fill="#fff"/></svg>
<svg class="a" style="left:271px;top:563.1px" width="22" height="22" viewBox="0 0 22 22"><rect x="0.5" y="0.5" width="21" height="21" fill="#fff" stroke="#84a2ca" stroke-width="0.95"/><rect x="12" y="1" width="9" height="20" fill="#9ccbf7"/><rect x="13.5" y="2.3" width="2" height="1.8" fill="#d9ecfd"/><rect x="17.1" y="2.3" width="2" height="1.8" fill="#d9ecfd"/><rect x="12.7" y="5.5" width="7" height="2.2" fill="#fff"/></svg>
<div class="a" style="left:307.4px;top:561px;width:1px;height:26px;background:#606060"></div>
<svg class="a" style="left:321px;top:565px" width="23" height="17" viewBox="0 0 23 17"><rect x="0.4" y="0" width="2.7" height="17" fill="#b1d3f6"/><rect x="20.2" y="0" width="2.7" height="17" fill="#b1d3f6"/><path d="M2.7 0V17M20.3 0V17" stroke="#6ea4dc" stroke-width="0.8"/><path d="M3 2.5H20M3 14.5H20" stroke="#dfe6ee" stroke-width="0.8"/><path d="M3.2 8.7L8.4 4.9V7.6H14.9V4.9L20.1 8.7L14.9 12.5V9.8H8.4V12.5Z" fill="#3c7cc0"/></svg>
<div class="a" style="left:358px;top:561px;width:1px;height:26px;background:#606060"></div>
<div class="a" style="left:367px;top:558px;width:34px;height:30.5px;background:#c9e5ff;border:1px solid #a4d3fb;border-radius:3.5px;box-sizing:border-box"></div>
<div class="a" style="left:401px;top:558px;width:34px;height:30.5px;background:#c9e5ff;border:1px solid #a4d3fb;border-radius:3.5px;box-sizing:border-box"></div>
<svg class="a" style="left:375px;top:564.6px" width="20" height="20" viewBox="0 0 20 20"><rect x="0" y="0" width="20" height="20" fill="#fff"/><path d="M0.5 0V20M5.5 0V20M10.5 0V20M15.5 0V20M0 0.5H20M0 5.5H20M0 10.5H20M0 15.5H20" stroke="#86aedf" stroke-width="1"/><path d="M5 5.5H6M10 5.5H11M15 5.5H16M5 10.5H6M10 10.5H11M15 10.5H16M5 15.5H6M10 15.5H11M15 15.5H16M0 5.5H1M0 10.5H1M0 15.5H1M5 0.5H6M10 0.5H11M15 0.5H16M0 0.5H1" stroke="#4878b4" stroke-width="1"/></svg>
<svg class="a" style="left:407px;top:563.7px" width="24" height="21" viewBox="0 0 24 21"><rect x="0.5" y="3.5" width="23" height="2.9" rx="1.45" fill="#fff" stroke="#6c9fd8" stroke-width="0.9"/><rect x="0.5" y="9.5" width="23" height="2.9" rx="1.45" fill="#fff" stroke="#6c9fd8" stroke-width="0.9"/><rect x="0.5" y="15.5" width="23" height="2.9" rx="1.45" fill="#fff" stroke="#6c9fd8" stroke-width="0.9"/></svg>
<div class="a" style="left:443.4px;top:561px;width:1px;height:26px;background:#606060"></div>
<div class="a" style="left:453px;top:557px;width:31px;height:32.6px;border:3px solid #dc1f27;box-sizing:border-box"></div>
<svg class="a" style="left:460px;top:561.5px" width="19" height="24" viewBox="0 0 19 24"><defs><linearGradient id="cg" x1="0" y1="0" x2="1" y2="0"><stop offset="0" stop-color="#cfe5fb"/><stop offset="0.3" stop-color="#fff"/><stop offset="0.7" stop-color="#fff"/><stop offset="1" stop-color="#d5e8fb"/></linearGradient></defs><rect x="0.6" y="2" width="17.2" height="20.2" rx="0.8" fill="url(#cg)" stroke="#72aae2" stroke-width="1.1"/><path d="M5.3 2.2V4.6H13.3V2.2" fill="#cfe3f8" stroke="#6aa3dd" stroke-width="1"/><circle cx="9.3" cy="2.3" r="1.5" fill="#fff" stroke="#7fb1e4" stroke-width="0.8"/></svg>
<div class="a" style="left:644px;top:563px;width:73px;height:23px;background:#fdfdfd;border:1px solid #1274c4;border-radius:4px;box-sizing:border-box"></div>
<svg class="a" style="left:649px;top:567px" width="22" height="18" viewBox="0 0 22 18"><path d="M1.8 10.2L7.4 15.4L20 2.8" fill="none" stroke="#3e9a42" stroke-width="2.2"/></svg>
<div class="t" style="left:672.6px;top:564.2px;height:23px;line-height:23px;color:#000;letter-spacing:-0.719px;">OK</div>
<div class="a" style="left:721.3px;top:563px;width:72px;height:23px;background:#fdfdfd;border:1px solid #d4d4d4;border-radius:4px;box-sizing:border-box"></div>
<svg class="a" style="left:729px;top:567px" width="16" height="16" viewBox="0 0 16 16"><path d="M1.2 1.2L14.8 14.8M14.8 1.2L1.2 14.8" fill="none" stroke="#e0473c" stroke-width="2.5"/></svg>
<div class="t" style="left:749.4px;top:564.2px;height:23px;line-height:23px;color:#000;letter-spacing:-0.392px;">Cancel</div>
<div class="a" style="left:798.5px;top:563px;width:72px;height:23px;background:#fdfdfd;border:1px solid #d4d4d4;border-radius:4px;box-sizing:border-box"></div>
<svg class="a" style="left:802px;top:567px" width="24" height="16" viewBox="0 0 24 16"><path d="M1 9.5L5 13.5L15.5 2.2M8 11.5L10.3 13.8L22.5 1.5" fill="none" stroke="#44a047" stroke-width="1.7"/></svg>
<div class="t" style="left:826.8px;top:564.2px;height:23px;line-height:23px;color:#000;letter-spacing:-0.004px;">Apply</div>
</div></div>
</body></html>
